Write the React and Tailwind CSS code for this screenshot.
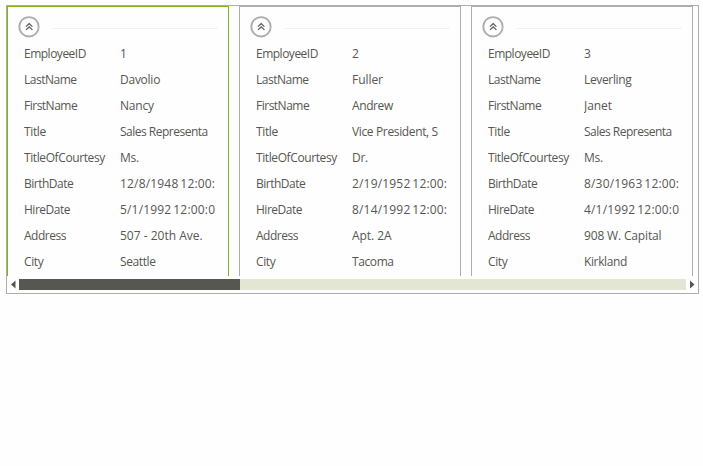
const labelTracking = {
  EmployeeID: "tracking-[-0.5px]",
  LastName: "tracking-[-0.5px]",
  FirstName: "tracking-[-0.5px]",
  Title: "tracking-[-0.35px]",
  TitleOfCourtesy: "tracking-[-0.4px]",
  BirthDate: "tracking-[-0.5px]",
  HireDate: "tracking-[-0.5px]",
  Address: "tracking-[-0.5px]",
  City: "tracking-[-0.4px]",
};

const dateStyle = "tracking-[0.18px] [word-spacing:-1.4px]";

const employees = [
  [
    ["EmployeeID", "1", ""],
    ["LastName", "Davolio", "tracking-[-0.25px]"],
    ["FirstName", "Nancy", "tracking-[-0.2px]"],
    ["Title", "Sales Representa", "tracking-[-0.5px]"],
    ["TitleOfCourtesy", "Ms.", "tracking-[-0.3px]"],
    ["BirthDate", "12/8/1948 12:00:", dateStyle],
    ["HireDate", "5/1/1992 12:00:0", dateStyle],
    ["Address", "507 - 20th Ave.", ""],
    ["City", "Seattle", "tracking-[-0.4px]"],
  ],
  [
    ["EmployeeID", "2", ""],
    ["LastName", "Fuller", "tracking-[-0.05px]"],
    ["FirstName", "Andrew", "tracking-[-0.4px]"],
    ["Title", "Vice President, S", "tracking-[-0.36px]"],
    ["TitleOfCourtesy", "Dr.", "tracking-[-0.3px]"],
    ["BirthDate", "2/19/1952 12:00:", dateStyle],
    ["HireDate", "8/14/1992 12:00:", dateStyle],
    ["Address", "Apt. 2A", "tracking-[-0.05px]"],
    ["City", "Tacoma", "tracking-[-0.4px]"],
  ],
  [
    ["EmployeeID", "3", ""],
    ["LastName", "Leverling", "tracking-[-0.35px]"],
    ["FirstName", "Janet", "tracking-[-0.05px]"],
    ["Title", "Sales Representa", "tracking-[-0.5px]"],
    ["TitleOfCourtesy", "Ms.", "tracking-[-0.3px]"],
    ["BirthDate", "8/30/1963 12:00:", dateStyle],
    ["HireDate", "4/1/1992 12:00:0", dateStyle],
    ["Address", "908 W. Capital", "tracking-[-0.16px]"],
    ["City", "Kirkland", "tracking-[-0.38px]"],
  ],
];

function CollapseButton() {
  return (
    <button className="h-[22px] w-[22px] shrink-0" aria-label="Collapse">
      <svg width="22" height="22" viewBox="0 0 22 22" fill="none">
        <circle cx="11" cy="10.8" r="9.7" stroke="#adadad" strokeWidth="1.8" />
        <path d="M8 10.6 11.2 7.5l3.2 3.1M8 13.9l3.2-3.1 3.2 3.1" stroke="#565751" strokeWidth="1.2" />
      </svg>
    </button>
  );
}

function Card({ rows, selected }) {
  return (
    <section
      className={`h-[300px] w-[222px] shrink-0 border bg-[#fefefe] ${selected ? "border-[#7fb41c]" : "border-[#adadad]"}`}
    >
      <div className="flex h-[34px] pl-[10px] pr-[10px] pt-[9px]">
        <CollapseButton />
        <div className="ml-3 mt-3 h-px grow bg-[#f2f2f2]" />
      </div>
      <dl className="pl-4">
        {rows.map(([label, value, tracking]) => (
          <div key={label} className="flex h-[26px] items-center leading-[26px]">
            <dt className={`w-24 shrink-0 ${labelTracking[label]}`}>{label}</dt>
            <dd className={`w-[97px] overflow-hidden ${tracking}`}>{value}</dd>
          </div>
        ))}
      </dl>
    </section>
  );
}

export default function App() {
  return (
    <main className="h-[466px] bg-[#fefefe] pl-[6px] pt-[5px] font-['Open_Sans','Noto_Sans',sans-serif] text-[12px] whitespace-nowrap text-[#565751]">
      <div className="h-[289px] w-[693px] border border-[#adadad]">
        <div className="flex h-[270px] gap-[10px] overflow-hidden">
          {employees.map((rows, i) => (
            <Card key={i} rows={rows} selected={i === 0} />
          ))}
        </div>
        <div className="mt-[3px] flex h-[11px] items-center">
          <svg className="ml-1 mr-[3px] shrink-0" width="5" height="9" viewBox="0 0 5 9">
            <path d="M4.5 0.5v8L0 4.5z" fill="#565751" />
          </svg>
          <div className="h-[11px] w-[667px] bg-[#e3e6d3]">
            <div className="h-full w-[221px] bg-[#565751]" />
          </div>
          <svg className="ml-1 shrink-0" width="5" height="9" viewBox="0 0 5 9">
            <path d="M0 0.5v8L4.5 4.5z" fill="#565751" />
          </svg>
        </div>
      </div>
    </main>
  );
}
